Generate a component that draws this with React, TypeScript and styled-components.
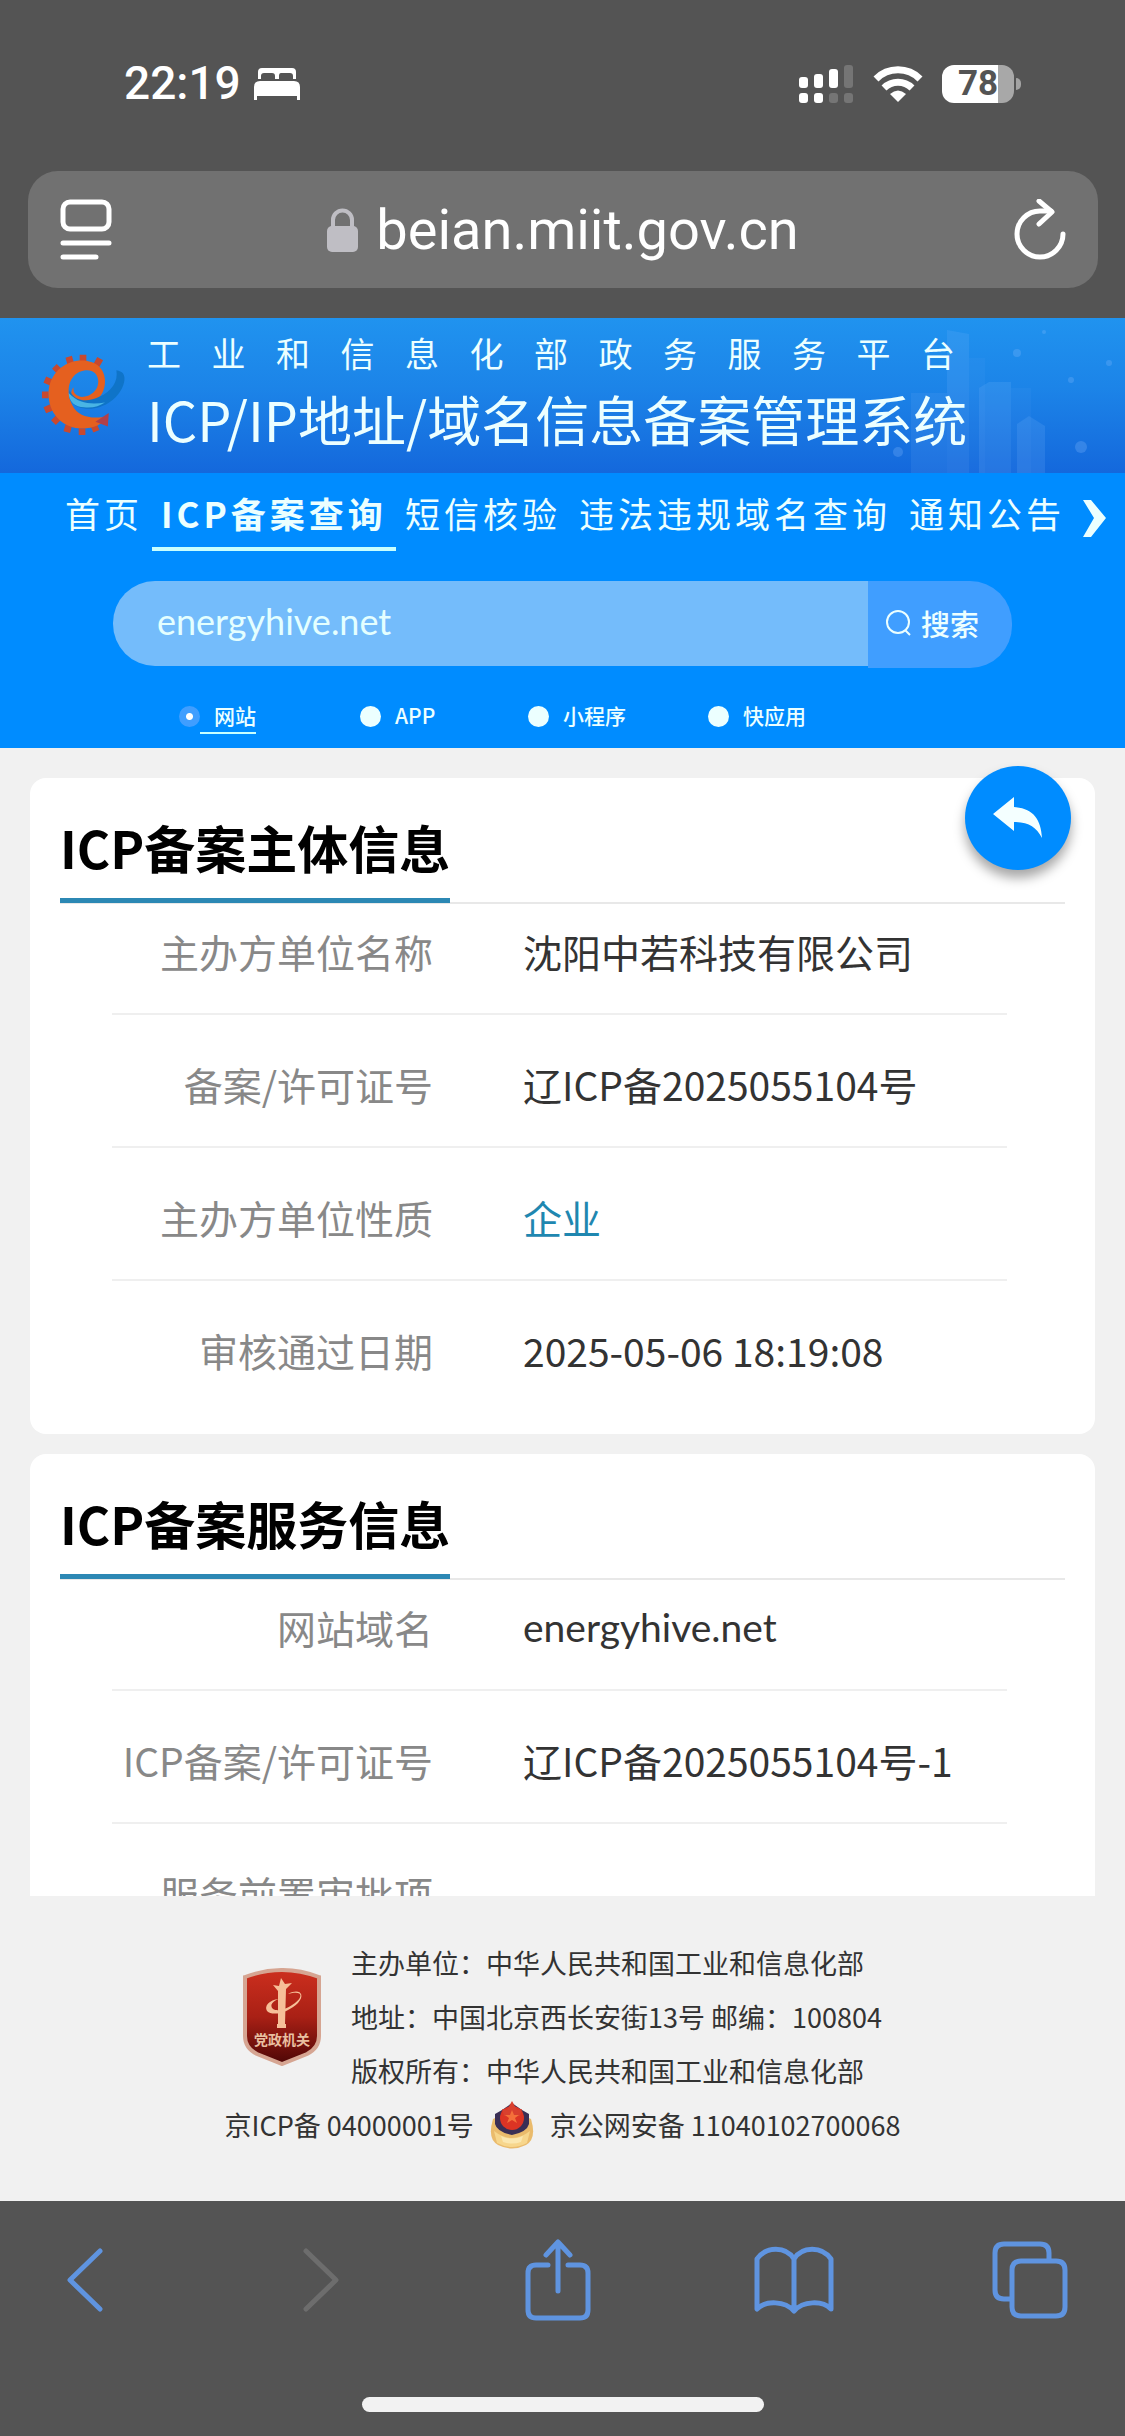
import React, { useState } from "react";
import styled, { createGlobalStyle, css } from "styled-components";

const chrome = "#545454";
const blue = "#008cff";
const link = "#5f94e0";
const latin = `Lato, "Noto Sans CJK SC", sans-serif`;

const GlobalStyle = createGlobalStyle`
  * { box-sizing: border-box; }
  body {
    margin: 0;
    background: ${chrome};
    font-family: "Noto Sans CJK SC", sans-serif;
    color: #333;
  }
  button { border: 0; padding: 0; background: none; font: inherit; color: inherit; display: flex; }
  svg { display: block; flex: none; }
  h1, h2, p, dl, dd, dt { margin: 0; }
`;

const Page = styled.div`
  display: flex;
  flex-direction: column;
  min-height: 100vh;
`;

const StatusBar = styled.div`
  display: flex;
  align-items: center;
  justify-content: space-between;
  padding: 54px 104px 58px 124px;
  color: #fff;
`;

const StatusGroup = styled.div<{ $gap: number }>`
  display: flex;
  align-items: center;
  gap: ${(p) => p.$gap}px;
`;

const Time = styled.span`
  font: 500 46px/59px Roboto, sans-serif;
`;

const Battery = styled.div`
  display: flex;
  align-items: center;
  gap: 2px;
  &::after {
    content: "";
    width: 5px;
    height: 12px;
    border-radius: 0 5px 5px 0;
    background: #a3a3a3;
  }
`;

const BatteryBody = styled.span`
  width: 72px;
  border-radius: 12px;
  background: linear-gradient(90deg, #fff 78%, #a8a8a8 78%);
  color: ${chrome};
  font: 700 35px/38px Roboto, sans-serif;
  text-align: center;
`;

const AddressBar = styled.div`
  display: flex;
  align-items: center;
  justify-content: space-between;
  height: 117px;
  margin: 0 27px 30px 28px;
  padding: 0 32px;
  border-radius: 30px;
  background: #717171;
  color: #fff;
`;

const Address = styled.div`
  display: flex;
  align-items: center;
  gap: 18px;
  font: 400 56px/64px Roboto, sans-serif;
`;

const Banner = styled.header`
  position: relative;
  display: flex;
  align-items: center;
  gap: 21px;
  height: 155px;
  padding: 0 32px 4px 40px;
  color: #ecffff;
  background: linear-gradient(#2093ef, #1c84e8 45%, #1468dc);
`;

const Skyline = styled.svg`
  position: absolute;
  right: 0;
  top: 0;
`;

const BannerText = styled.div`
  position: relative;
  width: 812px;
`;

const Ministry = styled.p`
  padding-right: 4px;
  font-size: 34px;
  line-height: 50px;
  text-align-last: justify;
`;

const SystemName = styled.h1`
  font-size: 54px;
  font-weight: 400;
  line-height: 82px;
  white-space: nowrap;
`;

const SearchPanel = styled.section`
  background: ${blue};
  color: #ecffff;
  height: 275px;
`;

const Nav = styled.nav`
  display: flex;
  align-items: flex-start;
  padding: 10px 19px 0 56px;
`;

const NavLink = styled.a<{ $active?: boolean }>`
  padding: 0 9px 5px;
  font-size: 35px;
  line-height: 59px;
  letter-spacing: 4px;
  white-space: nowrap;
  color: inherit;
  text-decoration: none;
  border-bottom: 4px solid transparent;
  ${(p) =>
    p.$active &&
    css`
      font-weight: 700;
      border-color: #c8ffff;
    `}
`;

const NavMore = styled.button`
  && {
    margin: 17px 0 0 auto;
  }
`;

const SearchForm = styled.form`
  display: flex;
  margin: 30px 113px 0;
  height: 87px;
`;

const SearchInput = styled.input`
  flex: 1;
  min-width: 0;
  height: 85px;
  border: 0;
  outline: 0;
  border-radius: 42px 0 0 42px;
  padding: 0 44px 6px;
  background: #74bcfb;
  color: #e4ffff;
  font: 400 36px ${latin};
`;

const SearchButton = styled.button`
  && {
    width: 144px;
    align-items: center;
    padding: 0 0 4px 17px;
    gap: 9px;
    border-radius: 0 42px 42px 0;
    background: #409eff;
    font-size: 29px;
    font-weight: 500;
  }
`;

const Kinds = styled.div`
  display: grid;
  grid-template-columns: 181px 168px 180px auto;
  margin: 30px 0 0 179px;
`;

const Kind = styled.label`
  display: flex;
  align-items: center;
  font-size: 21px;
  font-weight: 500;
  line-height: 34px;
`;

const KindRadio = styled.input`
  appearance: none;
  width: 21px;
  height: 21px;
  margin: 0;
  border-radius: 50%;
  background: #ecffff;
  &:checked {
    background: radial-gradient(circle, #fff 3px, #409eff 4px);
  }
`;

const KindName = styled.span<{ $active: boolean }>`
  padding-left: 14px;
  border-bottom: 2px solid ${(p) => (p.$active ? "#c8ffff" : "transparent")};
`;

const Content = styled.main`
  position: relative;
  background: #f1f1f1;
  padding: 30px 30px 0;
  display: flex;
  flex-direction: column;
  gap: 20px;
`;

const Card = styled.section<{ $clipped?: boolean }>`
  background: #fff;
  border-radius: 16px;
  padding: 0 30px 20px;
  ${(p) =>
    p.$clipped &&
    css`
      height: 442px;
      overflow: hidden;
      padding-bottom: 0;
      border-radius: 16px 16px 0 0;
    `}
`;

const CardHead = styled.div`
  display: flex;
  border-bottom: 2px solid #e8e8e8;
`;

const CardTitle = styled.h2`
  padding: 33px 0 15px;
  margin-bottom: -1px;
  border-bottom: 5px solid #2c88b4;
  color: #000;
  font-size: 51px;
  font-weight: 700;
  line-height: 72px;
`;

const Rows = styled.dl`
  padding: 0 58px 0 52px;
`;

const Row = styled.div`
  display: flex;
  gap: 90px;
  padding: 42px 0 34px;
  border-bottom: 2px solid #efefef;
  font-size: 39px;
  line-height: 55px;
  white-space: nowrap;
  &:first-child { padding-top: 20px; }
  &:last-child { border-color: transparent; }
`;

const Label = styled.dt`
  width: 321px;
  color: #888;
  text-align: right;
`;

const Value = styled.dd<{ $link?: boolean; $latin?: boolean }>`
  color: ${(p) => (p.$link ? "#1f87b0" : "#333")};
  ${(p) => p.$latin && css`font-family: ${latin};`}
`;

const BackButton = styled.button`
  && {
    position: absolute;
    right: 54px;
    top: 18px;
    width: 106px;
    height: 104px;
    align-items: center;
    justify-content: center;
    border-radius: 50%;
    background: ${blue};
    box-shadow: 0 8px 12px rgba(0, 0, 0, 0.35);
  }
`;

const Footer = styled.footer`
  flex: 1;
  background: #f1f1f1;
  padding: 40px 0 48px;
  display: flex;
  flex-direction: column;
  align-items: center;
  font-size: 27px;
  line-height: 54px;
  white-space: nowrap;
`;

const FooterTop = styled.div`
  display: flex;
  align-items: center;
  gap: 30px;
`;

const FooterRecords = styled.div`
  display: flex;
  align-items: center;
  gap: 15px;
`;

const Toolbar = styled.nav`
  display: flex;
  align-items: center;
  justify-content: space-between;
  padding: 38px 50px 0 40px;
`;

const ToolButton = styled.button`
  && {
    width: 90px;
    justify-content: center;
  }
`;

const HomeIndicator = styled.div`
  width: 402px;
  height: 15px;
  margin: 76px auto 24px;
  border-radius: 8px;
  background: #f2f2f2;
`;

const BedIcon = () => (
  <svg width="48" height="34" viewBox="0 0 48 34" fill="#fff">
    <path d="M5 12V5q0-4 4-4h30q4 0 4 4v7h-3V9q0-3-3-3h-9q-2 0-2 3v3h-4V9q0-3-3-3h-8q-3 0-3 3v3z" />
    <path d="M1 33V20q0-6 6-6h34q6 0 6 6v13h-3v-4H4v4z" />
  </svg>
);

const SignalIcon = () => (
  <svg width="56" height="38" viewBox="0 0 56 38" fill="#fff">
    <rect x="1" y="12" width="9" height="11" rx="3" />
    <rect x="16" y="9" width="9" height="14" rx="3" />
    <rect x="31" y="4" width="9" height="19" rx="3" />
    <rect x="46" y="0" width="9" height="23" rx="3" fill="#757575" />
    <rect x="1" y="28" width="9" height="10" rx="3" />
    <rect x="16" y="28" width="9" height="10" rx="3" />
    <rect x="31" y="28" width="9" height="10" rx="3" fill="#757575" />
    <rect x="46" y="28" width="9" height="10" rx="3" fill="#757575" />
  </svg>
);

const WifiIcon = () => (
  <svg width="50" height="36" viewBox="0 0 50 36">
    <g fill="none" stroke="#fff" strokeWidth="7">
      <path d="M3 13a31 31 0 0 1 44 0" />
      <path d="M11 22a20 20 0 0 1 28 0" />
    </g>
    <path d="M25 36l-8-8q8-7 16 0z" fill="#fff" />
  </svg>
);

const ReaderIcon = () => (
  <svg width="52" height="62" viewBox="0 0 52 62" fill="none" stroke="#fff" strokeWidth="5" strokeLinecap="round">
    <rect x="3" y="3" width="46" height="27" rx="7" />
    <path d="M3 44h46M3 58h33" />
  </svg>
);

const LockIcon = () => (
  <svg width="31" height="44" viewBox="0 0 31 44">
    <rect x="0" y="18" width="31" height="26" rx="5" fill="#bfbec4" />
    <path d="M6 20v-8a9.500 9.500 0 0 1 19 0v8" fill="none" stroke="#bfbec4" strokeWidth="4" />
  </svg>
);

const ReloadIcon = () => (
  <svg width="52" height="62" viewBox="0 0 52 62" fill="none" stroke="#fff" strokeWidth="5" strokeLinecap="round" strokeLinejoin="round">
    <path d="M49 35a23 23 0 1 1-23-23h11" />
    <path d="M25 2l13 11-13 12" />
  </svg>
);

const MinistryLogo = () => (
  <svg width="86" height="84" viewBox="0 0 88 88">
    <g stroke="#c8492f" strokeWidth="7">
      <path d="M31 12l-2-7M44 10V3M58 14l4-7M19 20l-5-5M11 32l-7-3M8 45H1M11 58l-7 3M18 69l-5 5M29 77l-2 7M43 80v7M55 76l3 7" />
    </g>
    <path d="M67 29C66 14 53 8 40 9 20 11 7 27 8 46c1 21 17 34 35 34 12 0 22-4 27-13-16 4-31 1-37-11-7-13-5-29 7-35 11-5 20 0 20 10s-9 17-19 16q-8-2-7-10-6 9 3 15c14 6 31-3 30-23z" fill="#e5601f" />
    <path d="M30 40c-2 9 2 15 10 18 18 6 42-6 47-26 2-9-2-12-8-13 2 12-5 22-18 28-12 6-26 5-31-7z" fill="#0f74c8" />
    <path d="M29 43c0 9 7 15 16 15 9 1 16-1 22-5-13 2-27 2-38-10z" fill="#49b4e4" />
    <path d="M57 73l14-9-1 14z" fill="#b0404a" />
  </svg>
);

const SkylineArt = () => (
  <Skyline width="250" height="155" viewBox="0 0 250 155" fill="#8fc0ff">
    <path d="M72 12l22 4v139H72z" opacity=".14" />
    <path d="M104 70l10-6h22v91h-32z" opacity=".15" />
    <path d="M142 106l12-8 16 10v47h-28z" opacity=".15" />
    <path d="M36 75h36v80H36z" opacity=".1" />
    <path d="M94 40h16v115H94zM136 70h20v85h-20z" opacity=".06" />
    <g opacity=".25">
      <circle cx="142" cy="35" r="4" /><circle cx="196" cy="62" r="3" /><circle cx="206" cy="129" r="6" />
      <circle cx="234" cy="45" r="3" /><circle cx="169" cy="14" r="2" /><circle cx="23" cy="134" r="5" />
    </g>
  </Skyline>
);

const ShieldIcon = () => (
  <svg width="78" height="98" viewBox="0 0 78 98">
    <defs>
      <linearGradient id="shield" x2="0" y2="1">
        <stop offset="0" stopColor="#cc2f1e" />
        <stop offset=".5" stopColor="#a92015" />
        <stop offset="1" stopColor="#4d0606" />
      </linearGradient>
    </defs>
    <path d="M2 9Q39-5 76 9v59q0 12-12 18L39 96 14 86Q2 80 2 68z" fill="url(#shield)" stroke="#d6a592" strokeWidth="4" />
    <path d="M35 23l-5-6 6 1 2-8 4 6 7-1-6 6-1 35h1v4H34v-4h1z" fill="#f6bf98" />
    <path d="M45 26c14-4 16 2 7 9-8 6-17 9-22 6-4-4 0-8 6-10-10 1-15 7-12 12 6 6 22 1 31-8 8-9 1-15-10-9z" fill="#f6bf98" />
    <text x="39" y="77" textAnchor="middle" fontSize="14" fontWeight="700" fill="#e9bfa0" fontFamily="Noto Sans CJK SC, sans-serif">党政机关</text>
  </svg>
);

const PoliceIcon = () => (
  <svg width="46" height="48" viewBox="0 0 46 48">
    <path d="M4 18q-6 20 5 26 14 7 28 0 11-6 5-26-19-10-38 0z" fill="#eabb6c" />
    <path d="M5 30q18 14 36 0l-3 12q-15 8-30 0z" fill="#f7d68c" />
    <path d="M12 35q11 5 22 0l-2 6q-9 3-18 0z" fill="#fbe7b0" />
    <path d="M6 13l7-4 10-7 10 7 7 4v10q-2 8-17 11Q8 31 6 23z" fill="#3a2f55" />
    <circle cx="23" cy="17" r="12" fill="#dc3424" />
    <path d="M13 8l5 1 5-9 5 9 5-1-2 7H15z" fill="#d9402e" />
    <path d="M23 9l2 5h5l-4 3 2 5-5-3-5 3 2-5-4-3h5z" fill="#f4703a" />
  </svg>
);

const ToolIcon = ({ w, h, color = link, d }: { w: number; h: number; color?: string; d: string }) => (
  <svg width={w} height={h} viewBox={`0 0 ${w} ${h}`} fill="none" stroke={color} strokeWidth="5" strokeLinecap="round" strokeLinejoin="round">
    <path d={d} />
  </svg>
);

type Entry = { label: string; value: string; link?: boolean; latin?: boolean };

const subject: Entry[] = [
  { label: "主办方单位名称", value: "沈阳中若科技有限公司" },
  { label: "备案/许可证号", value: "辽ICP备2025055104号" },
  { label: "主办方单位性质", value: "企业", link: true },
  { label: "审核通过日期", value: "2025-05-06 18:19:08" },
];

const service: Entry[] = [
  { label: "网站域名", value: "energyhive.net", latin: true },
  { label: "ICP备案/许可证号", value: "辽ICP备2025055104号-1" },
  { label: "服务前置审批项", value: "" },
];

const InfoCard = ({ title, entries, clipped }: { title: string; entries: Entry[]; clipped?: boolean }) => (
  <Card $clipped={clipped}>
    <CardHead>
      <CardTitle>{title}</CardTitle>
    </CardHead>
    <Rows>
      {entries.map((e) => (
        <Row key={e.label}>
          <Label>{e.label}</Label>
          <Value $link={e.link} $latin={e.latin}>{e.value}</Value>
        </Row>
      ))}
    </Rows>
  </Card>
);

const navItems = ["首页", "ICP备案查询", "短信核验", "违法违规域名查询", "通知公告"];
const kinds = ["网站", "APP", "小程序", "快应用"];

export default function App() {
  const [kind, setKind] = useState(kinds[0]);
  const [query, setQuery] = useState("energyhive.net");
  return (
    <Page>
      <GlobalStyle />
      <StatusBar>
        <StatusGroup $gap={12}>
          <Time>22:19</Time>
          <BedIcon />
        </StatusGroup>
        <StatusGroup $gap={19}>
          <SignalIcon />
          <WifiIcon />
          <Battery>
            <BatteryBody>78</BatteryBody>
          </Battery>
        </StatusGroup>
      </StatusBar>
      <AddressBar>
        <button aria-label="页面设置"><ReaderIcon /></button>
        <Address>
          <LockIcon />
          <span>beian.miit.gov.cn</span>
        </Address>
        <button aria-label="重新载入"><ReloadIcon /></button>
      </AddressBar>

      <Banner>
        <SkylineArt />
        <MinistryLogo />
        <BannerText>
          <Ministry>工业和信息化部政务服务平台</Ministry>
          <SystemName>ICP/IP地址/域名信息备案管理系统</SystemName>
        </BannerText>
      </Banner>

      <SearchPanel>
        <Nav>
          {navItems.map((item, i) => (
            <NavLink key={item} href="#" $active={i === 1}>{item}</NavLink>
          ))}
          <NavMore aria-label="更多">
            <svg width="23" height="37" viewBox="0 0 23 37" fill="#ecffff">
              <path d="M0 0h8l15 18L8 37H0l11-19z" />
            </svg>
          </NavMore>
        </Nav>
        <SearchForm onSubmit={(e) => e.preventDefault()}>
          <SearchInput aria-label="查询内容" value={query} onChange={(e) => setQuery(e.target.value)} />
          <SearchButton type="submit">
            <svg width="27" height="27" viewBox="0 0 27 27" fill="none" stroke="#ecffff" strokeWidth="2">
              <circle cx="13" cy="13" r="11" />
              <path d="M20 21l5 5" />
            </svg>
            搜索
          </SearchButton>
        </SearchForm>
        <Kinds>
          {kinds.map((k) => (
            <Kind key={k}>
              <KindRadio type="radio" name="kind" checked={k === kind} onChange={() => setKind(k)} />
              <KindName $active={k === kind}>{k}</KindName>
            </Kind>
          ))}
        </Kinds>
      </SearchPanel>

      <Content>
        <InfoCard title="ICP备案主体信息" entries={subject} />
        <InfoCard title="ICP备案服务信息" entries={service} clipped />
        <BackButton aria-label="返回">
          <svg width="50" height="42" viewBox="0 0 50 42" fill="#f4ffff">
            <path d="M0 17L21 0v10c19 1 27 12 28 31-6-11-13-16-28-16v9z" />
          </svg>
        </BackButton>
      </Content>

      <Footer>
        <FooterTop>
          <ShieldIcon />
          <div>
            <p>主办单位：中华人民共和国工业和信息化部</p>
            <p>地址：中国北京西长安街13号 邮编：100804</p>
            <p>版权所有：中华人民共和国工业和信息化部</p>
          </div>
        </FooterTop>
        <FooterRecords>
          <span>京ICP备 04000001号</span>
          <PoliceIcon />
          <span>京公网安备 11040102700068</span>
        </FooterRecords>
      </Footer>

      <Toolbar>
        <ToolButton aria-label="后退"><ToolIcon w={42} h={66} d="M36 4L6 33l30 29" /></ToolButton>
        <ToolButton aria-label="前进"><ToolIcon w={42} h={66} color="#6d6d6d" d="M6 4l30 29L6 62" /></ToolButton>
        <ToolButton aria-label="共享">
          <ToolIcon w={66} h={82} d="M23 26H11q-8 0-8 8v37q0 8 8 8h44q8 0 8-8V34q0-8-8-8H43M33 52V4M21 16L33 3l12 13" />
        </ToolButton>
        <ToolButton aria-label="书签">
          <ToolIcon w={80} h={70} d="M40 66C31 56 12 55 3 64V14C12 1 32 1 40 14 48 1 68 1 77 14v50C68 55 49 56 40 66V14" />
        </ToolButton>
        <ToolButton aria-label="标签页">
          <ToolIcon w={76} h={78} d="M57 20V12q0-9-9-9H12q-9 0-9 9v37q0 9 9 9h8M29 20h35q9 0 9 9v37q0 9-9 9H29q-9 0-9-9V29q0-9 9-9z" />
        </ToolButton>
      </Toolbar>
      <HomeIndicator />
    </Page>
  );
}
